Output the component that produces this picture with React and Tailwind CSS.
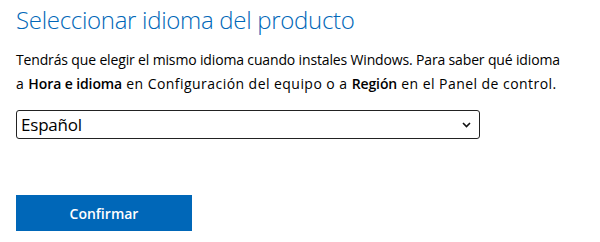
import React from "react";

export default function App() {
  return (
    <div className="w-[600px] h-[242px] overflow-hidden bg-white pl-4 font-['Open_Sans',sans-serif] text-black">
      {/* Page heading */}
      <h1 className="pt-[3px] text-[24px] leading-[33px] font-light tracking-[-0.3px] text-[#0067b8] whitespace-nowrap">
        Seleccionar idioma del producto
      </h1>

      <p className="mt-3 text-[14px] leading-6 whitespace-nowrap">
        <span className="tracking-[-0.15px]">
          Tendrás que elegir el mismo idioma cuando instales Windows. Para saber qué idioma
        </span>
        <br />
        <span className="tracking-[0.45px]">
          a <b className="font-semibold tracking-[-0.1px]">Hora e idioma</b> en Configuración del equipo o a{" "}
          <b className="font-semibold tracking-[-0.1px]">Región</b> en el Panel de control.
        </span>
      </p>

      {/* Language dropdown */}
      <div className="mt-[14px] flex h-[29px] w-[464px] items-center justify-between rounded-[3px] border-[1.5px] border-[#222] pl-1 pr-2">
        <span className="text-[17px] leading-none tracking-[-0.2px]">Español</span>
        <svg width="9" height="6" viewBox="0 0 9 6" fill="none">
          <path d="M1 1l3.5 3.5L8 1" stroke="#111" strokeWidth="1.6" />
        </svg>
      </div>

      <button className="mt-[56px] flex h-9 w-[176px] items-center justify-center bg-[#0067b8] text-[14px] font-semibold text-white">
        Confirmar
      </button>
    </div>
  );
}
